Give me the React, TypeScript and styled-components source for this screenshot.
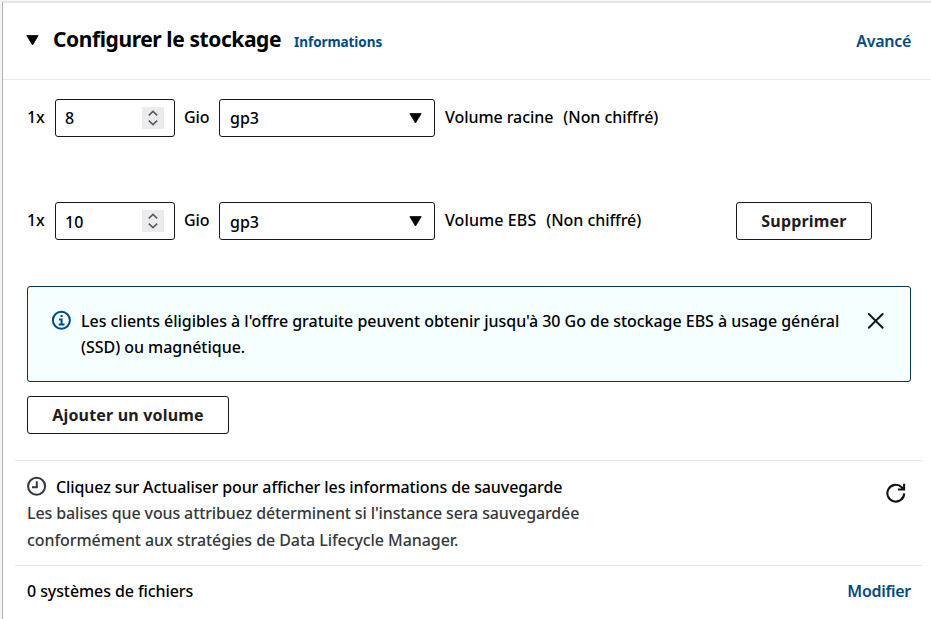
import React from 'react';
import styled, { createGlobalStyle } from 'styled-components';

const GlobalStyle = createGlobalStyle`
  * { box-sizing: border-box; }
  body {
    margin: 0;
    background: #f4f4f4;
    color: #000;
    font: 500 16px/26px "Noto Sans", sans-serif;
    overflow: hidden;
  }
  svg { display: block; flex: none; }
`;

const Panel = styled.main`
  display: flex;
  flex-direction: column;
  width: 929px;
  height: 618px;
  margin: 1px 0 0 2px;
  border-top: 2px solid #e6e7e7;
  border-left: 1px solid #b2b2b2;
  background: #fff;
`;

const Header = styled.header`
  height: 77px;
  flex: none;
  display: flex;
  align-items: center;
  padding: 0 20px 2px 23px;
  border-bottom: 1px solid #e9ebed;
`;

const Title = styled.h2`
  margin: 0 0 2px 14px;
  font-size: 21px;
  font-weight: 700;
  line-height: 28px;
  letter-spacing: -0.415px;
  white-space: nowrap;
`;

const InfoLink = styled.a`
  margin: 4px 0 0 13px;
  font-size: 13.5px;
  font-weight: 700;
  line-height: 20px;
  letter-spacing: -0.07px;
  color: #004b7f;
`;

const ActionLink = styled.a<{ $top?: number }>`
  margin-left: auto;
  padding-top: ${p => p.$top ?? 0}px;
  color: #004b7f;
  font-weight: 600;
  letter-spacing: -0.3px;
  white-space: nowrap;
`;

const Body = styled.section`
  display: flex;
  flex-direction: column;
  align-items: flex-start;
  padding: 19px 20px 26px 24px;
`;

const VolumeRow = styled.div<{ $last?: boolean }>`
  display: flex;
  align-items: center;
  width: 845px;
  height: 38px;
  margin-bottom: ${p => (p.$last ? 46 : 65)}px;
`;

const Label = styled.span<{ $width?: number; $gap?: number; $spacing?: number }>`
  width: ${p => (p.$width ? `${p.$width}px` : 'auto')};
  margin-left: ${p => p.$gap ?? 0}px;
  letter-spacing: ${p => p.$spacing ?? -0.06}px;
  padding-bottom: 2px;
  white-space: nowrap;
`;

const Field = styled.div<{ $width: number; $inset: number; $end: number }>`
  display: flex;
  align-items: center;
  justify-content: space-between;
  width: ${p => p.$width}px;
  height: 38px;
  padding: 0 ${p => p.$end}px 0 ${p => p.$inset}px;
  border: 1px solid #16191f;
  border-radius: 3px;
  flex: none;
`;

const Value = styled.span<{ $top: number }>`
  padding-top: ${p => p.$top}px;
`;

const Spinner = styled.span`
  display: flex;
  align-items: center;
  justify-content: center;
  width: 22px;
  height: 22px;
  background: #ebebed;
`;

const Button = styled.button<{ $width: number; $push?: boolean }>`
  width: ${p => p.$width}px;
  height: 38px;
  margin: 0 0 0 ${p => (p.$push ? 'auto' : 0)};
  padding: 0;
  border: 1px solid #16191f;
  border-radius: 3px;
  background: #fff;
  color: #1c1e22;
  font: 700 16px/26px "Noto Sans", sans-serif;
  letter-spacing: 0.18px;
`;

const Alert = styled.div`
  display: flex;
  align-items: flex-start;
  width: 884px;
  height: 96px;
  margin-bottom: 14px;
  padding: 21px 26px 0 23px;
  border: 1px solid #04374f;
  border-radius: 3px;
  background: #f5ffff;
`;

const AlertText = styled.p`
  flex: 1;
  margin: 0 0 0 10px;
  letter-spacing: -0.034px;
  white-space: nowrap;
`;

const IconSlot = styled.span<{ $top: number; $end?: number }>`
  padding-top: ${p => p.$top}px;
  margin-right: ${p => p.$end ?? 0}px;
`;

const Section = styled.section<{ $height: number; $top: number }>`
  display: flex;
  height: ${p => p.$height}px;
  margin: 0 8px 0 12px;
  padding: ${p => p.$top}px 12px 0;
  border-top: 1px solid #e4e6e8;
  flex: none;
`;

const Backup = styled.div`
  flex: 1;
`;

const BackupTitle = styled.div`
  display: flex;
  gap: 9px;
  letter-spacing: -0.1px;
`;

const BackupText = styled.p`
  margin: 0;
  line-height: 27px;
  color: #35383c;
`;

const TextLine = styled.span<{ $spacing: number }>`
  display: block;
  letter-spacing: ${p => p.$spacing}px;
`;

const FileSystems = styled.span`
  letter-spacing: -0.09px;
`;

const CaretDown = () => (
  <svg width="13" height="11" viewBox="0 0 13 11">
    <path d="M.8.6h11.4L6.5 10z" fill="#000" stroke="#000" strokeWidth=".8" strokeLinejoin="round" />
  </svg>
);

const Stepper = () => (
  <Spinner>
    <svg width="22" height="22" viewBox="0 0 22 22" fill="none" stroke="#5c5c60" strokeWidth="1.6">
      <path d="M6.8 8.3 11 4.3l4.2 4M6.8 13.7l4.2 4 4.2-4" />
    </svg>
  </Spinner>
);

const InfoIcon = () => (
  <svg width="20" height="20" viewBox="0 0 20 20" fill="none" stroke="#004b86" strokeWidth="2">
    <circle cx="10.4" cy="10.3" r="8.5" />
    <path d="M10.6 5.1v2M8 9.4h2.6v4.8M7.7 14.4h5.8" />
  </svg>
);

const CloseIcon = () => (
  <svg width="16" height="16" viewBox="0 0 16 16" fill="none" stroke="#16191f" strokeWidth="2" strokeLinecap="round">
    <path d="m.8 1 13.8 13.8M14.6 1 .8 14.8" />
  </svg>
);

const ClockIcon = () => (
  <svg width="20" height="20" viewBox="0 0 20 20" fill="none" stroke="#35383c" strokeWidth="2">
    <circle cx="9.6" cy="10.3" r="8.5" />
    <path d="M9.8 5.3v5.9H5" />
  </svg>
);

const RefreshIcon = () => (
  <svg width="20" height="20" viewBox="0 0 20 20" fill="none" stroke="#111418" strokeWidth="2.1">
    <path d="M18.2 10.4a8.4 8.4 0 1 1-2.5-6.2l1.6 1.8M18.1.8v5.7h-6.2" />
  </svg>
);

interface Volume {
  size: number;
  type: string;
  name: string;
  removable?: boolean;
}

const volumes: Volume[] = [
  { size: 8, type: 'gp3', name: 'Volume racine' },
  { size: 10, type: 'gp3', name: 'Volume EBS', removable: true },
];

export default function App() {
  return (
    <>
      <GlobalStyle />
      <Panel>
        <Header>
          <CaretDown />
          <Title>Configurer le stockage</Title>
          <InfoLink>Informations</InfoLink>
          <ActionLink $top={2}>Avancé</ActionLink>
        </Header>
        <Body>
          {volumes.map(v => (
            <VolumeRow key={v.name} $last={v.removable}>
              <Label $width={28}>1x</Label>
              <Field $width={120} $inset={9} $end={10}>
                <Value $top={v.removable ? 2 : 0}>{v.size}</Value>
                <Stepper />
              </Field>
              <Label $width={35} $gap={9}>Gio</Label>
              <Field $width={216} $inset={10} $end={12}>
                <Value $top={v.removable ? 2 : 0}>{v.type}</Value>
                <CaretDown />
              </Field>
              <Label $gap={10} $spacing={v.removable ? 0.1 : -0.06}>{v.name}</Label>
              <Label $gap={10}>(Non chiffré)</Label>
              {v.removable && <Button $width={136} $push>Supprimer</Button>}
            </VolumeRow>
          ))}
          <Alert>
            <IconSlot $top={2}><InfoIcon /></IconSlot>
            <AlertText>
              Les clients éligibles à l'offre gratuite peuvent obtenir jusqu'à 30 Go de stockage EBS à usage général
              <br />
              (SSD) ou magnétique.
            </AlertText>
            <IconSlot $top={5}><CloseIcon /></IconSlot>
          </Alert>
          <Button $width={202}>Ajouter un volume</Button>
        </Body>
        <Section $height={105} $top={13}>
          <Backup>
            <BackupTitle>
              <IconSlot $top={2}><ClockIcon /></IconSlot>
              Cliquez sur Actualiser pour afficher les informations de sauvegarde
            </BackupTitle>
            <BackupText>
              <TextLine $spacing={-0.125}>
                Les balises que vous attribuez déterminent si l'instance sera sauvegardée
              </TextLine>
              <TextLine $spacing={-0.07}>conformément aux stratégies de Data Lifecycle Manager.</TextLine>
            </BackupText>
          </Backup>
          <IconSlot $top={9} $end={5}><RefreshIcon /></IconSlot>
        </Section>
        <Section $height={53} $top={12}>
          <FileSystems>0 systèmes de fichiers</FileSystems>
          <ActionLink>Modifier</ActionLink>
        </Section>
      </Panel>
    </>
  );
}
